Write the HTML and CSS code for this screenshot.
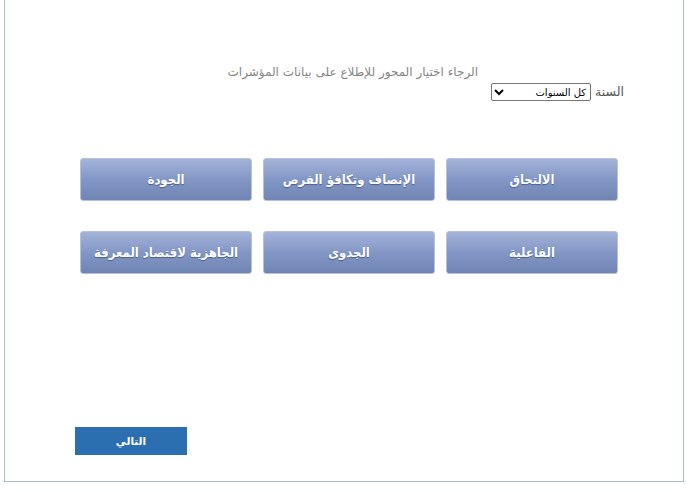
FILE: index.html
```html
<!DOCTYPE html>
<html lang="ar" dir="rtl">
<head>
<meta charset="utf-8">
<link rel="stylesheet" href="styles.css">
</head>
<body>
<div class="frame">
  <div class="intro">
    <p class="prompt">الرجاء اختيار المحور للإطلاع على بيانات المؤشرات</p>
    <div class="year-row">
      <label class="year-label">السنة</label>
      <select class="year-select"><option>كل السنوات</option></select>
    </div>
  </div>
  <div class="grid">
    <a class="axis">الالتحاق</a>
    <a class="axis">الإنصاف وتكافؤ الفرص</a>
    <a class="axis">الجودة</a>
    <a class="axis">الفاعلية</a>
    <a class="axis">الجدوى</a>
    <a class="axis">الجاهزية لاقتصاد المعرفة</a>
  </div>
  <div class="footer">
    <button class="next">التالي</button>
  </div>
</div>
</body>
</html>
```
FILE: styles.css
```css
html, body { margin: 0; padding: 0; background: #fff; }
body { font-family: "DejaVu Sans", "Liberation Sans", sans-serif; }
.frame {
  margin: 0 3px 0 4px;
  height: 482px;
  border: 1px solid #a9bccb;
  border-top: none;
  box-sizing: border-box;
  display: flex;
  flex-direction: column;
}
.intro { padding: 62px 59px 0 0; }
.prompt {
  margin: 0;
  padding-right: 146px;
  font-size: 12px;
  color: #858585;
  line-height: 20px;
}
.year-row { display: flex; align-items: center; gap: 4px; margin-top: 1px; }
.year-label { font-size: 12.5px; color: #555; line-height: 16px; }
.year-select {
  width: 100px; height: 18px;
  font-size: 10px; font-family: "DejaVu Sans", sans-serif;
  border: 1px solid #767676; border-radius: 2px; background: #fff; color: #000;
  padding: 0;
}
.grid {
  margin: 57px 65px 0 0;
  width: 538px;
  display: grid;
  grid-template-columns: repeat(3, 172px);
  column-gap: 11px;
  row-gap: 30px;
}
.axis {
  height: 43px;
  box-sizing: border-box;
  border: 1px solid #b7c1d3;
  border-radius: 3px;
  background: linear-gradient(#a3b3d9, #8397c6 50%, #6f85b4);
  color: #fff;
  font-family: "DejaVu Sans Condensed", "DejaVu Sans", sans-serif;
  font-weight: bold;
  font-size: 13px;
  display: flex; align-items: center; justify-content: center;
  text-shadow: 0 1px 1px #4a5d86;
}
.footer { margin-top: auto; padding: 0 0 26px 70px; display: flex; justify-content: flex-end; }
.next {
  width: 112px; height: 28px;
  background: #2c6fb0; color: #fff;
  border: none; font-weight: bold; font-size: 10.5px;
  font-family: "DejaVu Sans", sans-serif;
}
```
